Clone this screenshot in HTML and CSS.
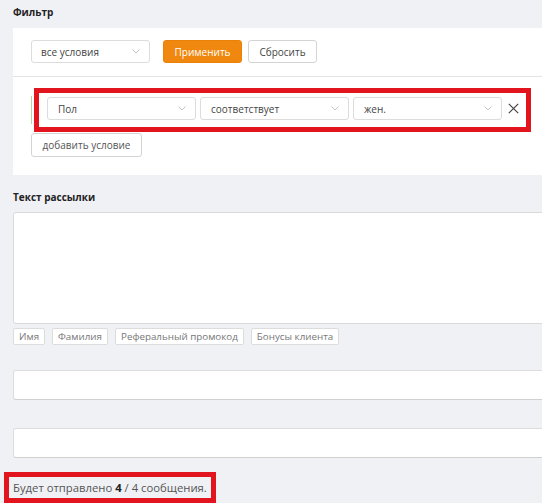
FILE: index.html
```html
<!DOCTYPE html>
<html lang="ru">
<head>
<meta charset="utf-8">
<title>Рассылка</title>
<link rel="stylesheet" href="styles.css">
</head>
<body>
<div class="page">
  <h3 class="heading heading-filter">Фильтр</h3>
  <div class="card">
    <div class="card-top">
      <div class="select select-mode">
        <span class="select-text">все условия</span>
        <svg class="chev" width="8" height="5" viewBox="0 0 8 5"><path d="M0.5 0.5 L4 4 L7.5 0.5" fill="none" stroke="#c4c4c4" stroke-width="1"/></svg>
      </div>
      <button class="btn btn-primary">Применить</button>
      <button class="btn btn-default">Сбросить</button>
    </div>
    <div class="card-body">
      <div class="cond-row">
        <span class="cond-mark"></span>
        <div class="annot cond-box">
          <div class="select select-cond">
            <span class="select-text">Пол</span>
            <svg class="chev" width="8" height="5" viewBox="0 0 8 5"><path d="M0.5 0.5 L4 4 L7.5 0.5" fill="none" stroke="#c4c4c4" stroke-width="1"/></svg>
          </div>
          <div class="select select-cond">
            <span class="select-text">соответствует</span>
            <svg class="chev" width="8" height="5" viewBox="0 0 8 5"><path d="M0.5 0.5 L4 4 L7.5 0.5" fill="none" stroke="#c4c4c4" stroke-width="1"/></svg>
          </div>
          <div class="select select-cond">
            <span class="select-text">жен.</span>
            <svg class="chev" width="8" height="5" viewBox="0 0 8 5"><path d="M0.5 0.5 L4 4 L7.5 0.5" fill="none" stroke="#c4c4c4" stroke-width="1"/></svg>
          </div>
          <svg class="remove" width="11" height="11" viewBox="0 0 11 11"><path d="M0.8 0.8 L10.2 10.2 M10.2 0.8 L0.8 10.2" fill="none" stroke="#444" stroke-width="1.2"/></svg>
        </div>
      </div>
      <button class="btn btn-default btn-add">добавить условие</button>
    </div>
  </div>

  <h3 class="heading heading-text">Текст рассылки</h3>
  <div class="textarea"></div>
  <div class="tags">
    <span class="tag">Имя</span>
    <span class="tag">Фамилия</span>
    <span class="tag">Реферальный промокод</span>
    <span class="tag">Бонусы клиента</span>
  </div>
  <div class="input input-first"></div>
  <div class="input input-second"></div>
  <div class="annot count">Будет отправлено <b>4</b> / 4 сообщения.</div>
</div>
</body>
</html>
```
FILE: styles.css
```css
html, body {
  margin: 0;
  padding: 0;
  background: #f0f1f5;
  overflow: hidden;
}
body {
  font-family: "Open Sans", "Noto Sans", sans-serif;
  font-size: 10px;
  color: #333;
}
.page {
  padding: 4px 0 0 13px;
  width: 560px;
}
.heading {
  margin: 0;
  font-size: 10px;
  line-height: 16px;
  font-weight: 700;
  color: #222;
}
.card {
  margin-top: 8px;
  background: #fff;
}
.card-top {
  display: flex;
  align-items: center;
  padding: 12px 0 13px 18px;
  border-bottom: 1px solid #e4e4e4;
}
.select {
  box-sizing: border-box;
  height: 23px;
  border: 1px solid #dcdcdc;
  border-radius: 3px;
  background: #fff;
  display: flex;
  align-items: center;
  justify-content: space-between;
  padding: 0 9px 0 9px;
  color: #444;
}
.select-mode {
  width: 119px;
}
.select-cond {
  width: 149px;
  padding-left: 10px;
}
.select-text {
  white-space: nowrap;
}
.chev {
  display: block;
  flex: none;
}
.btn {
  box-sizing: border-box;
  height: 23px;
  border-radius: 3px;
  font-family: inherit;
  font-size: 10px;
  padding: 0;
  cursor: pointer;
}
.btn-primary {
  margin-left: 13px;
  width: 79px;
  background: #f0870f;
  border: 1px solid #ec810a;
  color: #fff;
}
.btn-default {
  background: #fff;
  border: 1px solid #d4d4d4;
  color: #444;
}
.card-top .btn-default {
  margin-left: 6px;
  width: 69px;
}
.card-body {
  padding: 11px 0 18px 18px;
}
.cond-row {
  display: flex;
  align-items: center;
}
.cond-mark {
  width: 1px;
  height: 28px;
  background: #b9d7a6;
  margin-right: 2px;
}
.annot {
  border: 5px solid #e2141e;
}
.cond-box {
  display: flex;
  align-items: center;
  gap: 4px;
  padding: 4px 7px 7px 8px;
}
.remove {
  display: block;
  margin-left: 2px;
}
.btn-add {
  display: block;
  margin-top: 1px;
  width: 111px;
  height: 24px;
  color: #555;
}
.heading-text {
  margin-top: 14px;
}
.textarea {
  margin-top: 7px;
  height: 110px;
  background: #fff;
  border: 1px solid #d9d9d9;
  border-radius: 3px;
}
.tags {
  display: flex;
  gap: 7px;
  margin-top: 4px;
}
.tag {
  box-sizing: border-box;
  height: 17px;
  line-height: 15px;
  padding: 0 5px;
  border: 1px solid #dcdcdc;
  border-radius: 2px;
  background: #fff;
  font-size: 9.8px;
  color: #777;
}
.input {
  height: 28px;
  background: #fff;
  border: 1px solid #dcdcdc;
  border-bottom-color: #d0d0d0;
  border-radius: 3px;
}
.input-first {
  margin-top: 25px;
}
.input-second {
  margin-top: 28px;
}
.count {
  display: inline-block;
  margin: 14px 0 0 -9px;
  padding: 3px 4px;
  font-size: 11.3px;
  line-height: 15px;
  color: #555;
}
.count b {
  color: #222;
}
```
